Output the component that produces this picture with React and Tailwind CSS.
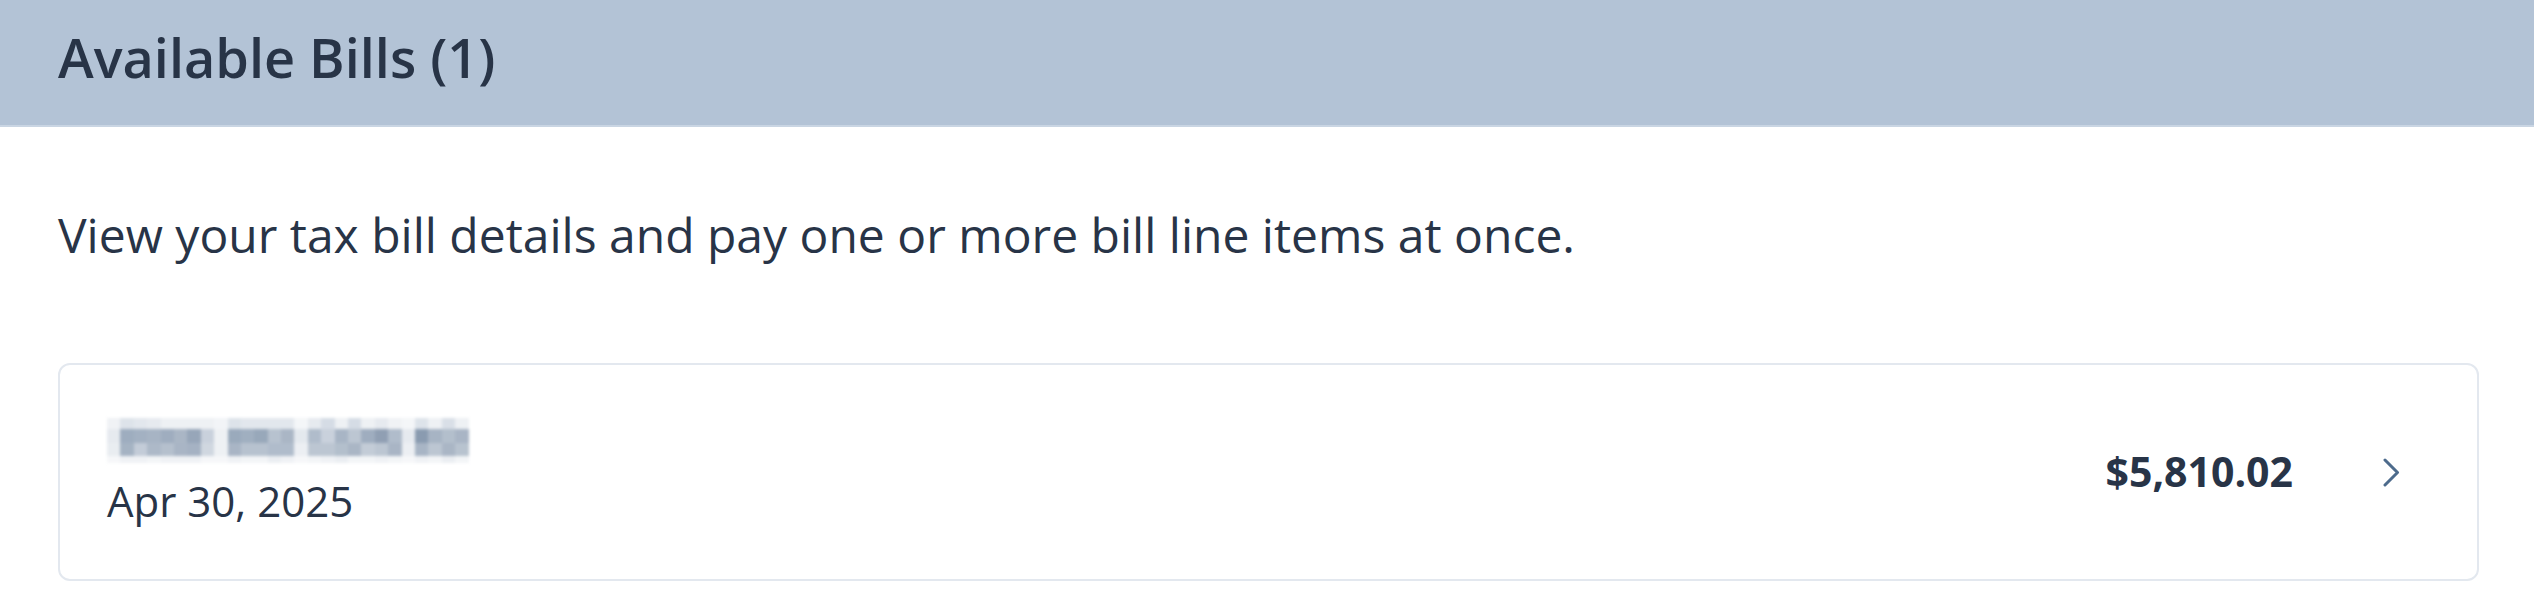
import React from 'react';

// pixelated (redacted) bill number, colours per cell, row by row
const REDACTED_ROWS = [
  {
    h: 'h-[11px]',
    cells: ['#f0f2f5', '#dde3ea', '#e2e7ed', '#e6eaef', '#eef1f4', '#eef1f4', '#eef1f4', '#eef1f4', '#f2f4f7', '#dde3ea', '#e2e7ed', '#e2e7ed', '#e2e7ed', '#e2e7ed', '#f4f6f8', '#e6eaef', '#d5dce5', '#eef1f4', '#d5dce5', '#eef1f4', '#e6eaef', '#f0f2f5', '#f4f6f8', '#dde3ea', '#eef1f4', '#d9dfe7', '#eef1f4'],
  },
  {
    h: 'h-[14px]',
    cells: ['#e6eaef', '#9eadbf', '#a3b1c2', '#a7b4c4', '#9fadbf', '#aab6c5', '#97a6b9', '#c9d1dc', '#eef1f4', '#9aaabc', '#a0afc0', '#98a8ba', '#b7c2cf', '#aab6c5', '#e4e9ee', '#b0bccb', '#c9d1dc', '#a8b5c5', '#bcc6d2', '#9fadbf', '#909fb3', '#b0bccb', '#e6eaef', '#8a9bb0', '#a7b4c4', '#b3bfcc', '#a9b5c5'],
  },
  {
    h: 'h-[13px]',
    cells: ['#e9edf1', '#a5b3c3', '#c3ccd8', '#adb9c8', '#b5c0cd', '#a9b5c5', '#a5b2c3', '#d0d7e0', '#eef1f4', '#a9b5c5', '#b7c2cf', '#b7c2cf', '#b0bccb', '#b0bccb', '#eceff3', '#bcc6d2', '#bcc6d2', '#b3bfcc', '#aab6c5', '#c3ccd7', '#bcc6d2', '#a9b5c5', '#eceff3', '#a8b5c5', '#bcc6d2', '#aab6c5', '#b8c3cf'],
  },
  {
    h: 'h-[7px]',
    cells: ['#f6f7f9', '#f0f2f5', '#f0f2f5', '#f3f5f7', '#f0f2f5', '#f0f2f5', '#f0f2f5', '#f6f7f9', '#f6f7f9', '#f0f2f5', '#f3f5f7', '#f3f5f7', '#ebeef2', '#f0f2f5', '#f6f7f9', '#f3f5f7', '#f0f2f5', '#ebeef2', '#f3f5f7', '#f3f5f7', '#f0f2f5', '#f3f5f7', '#f6f7f9', '#f0f2f5', '#f3f5f7', '#ebeef2', '#f3f5f7'],
  },
];

const Redacted = () => (
  <div className="flex flex-col blur-[1.5px]">
    {REDACTED_ROWS.map((row, i) => (
      <div key={i} className={`flex ${row.h}`}>
        {row.cells.map((c, j) => (
          <div key={j} className="w-[13.4px] h-full" style={{ backgroundColor: c }} />
        ))}
      </div>
    ))}
  </div>
);

const BillRow = ({ date, amount }) => (
  <div className="flex items-center justify-between h-[218px] border-2 border-[#e3e8ef] rounded-[12px] pl-[47px] pr-[77px]">
    <div className="flex flex-col pt-[3px]">
      <Redacted />
      <span className="text-[42px] leading-[57px] mt-[9px] text-[#283447]">{date}</span>
    </div>
    <div className="flex items-center gap-[90px]">
      <span className="text-[41px] font-bold text-[#283447]">{amount}</span>
      <svg width="17" height="29" viewBox="0 0 17 29" fill="none">
        <path d="M2 2 L14.5 14.5 L2 27" stroke="#4d6b8c" strokeWidth="3" strokeLinecap="round" strokeLinejoin="round" />
      </svg>
    </div>
  </div>
);

export default function App() {
  return (
    <div className="min-h-screen bg-white" style={{ fontFamily: '"Open Sans", "Noto Sans", sans-serif' }}>
      {/* Header */}
      <div className="h-[127px] bg-[#b3c3d6] border-b-2 border-[#c9d5e3] px-[58px] pt-[17px]">
        <h1 className="text-[54px] font-semibold leading-normal text-[#283447]">Available Bills (1)</h1>
      </div>

      <div className="pl-[58px] pr-[55px]">
        <p className="text-[48px] leading-normal text-[#283447] mt-[72px] mb-[92px]">
          View your tax bill details and pay one or more bill line items at once.
        </p>
        <BillRow date="Apr 30, 2025" amount="$5,810.02" />
      </div>
    </div>
  );
}
